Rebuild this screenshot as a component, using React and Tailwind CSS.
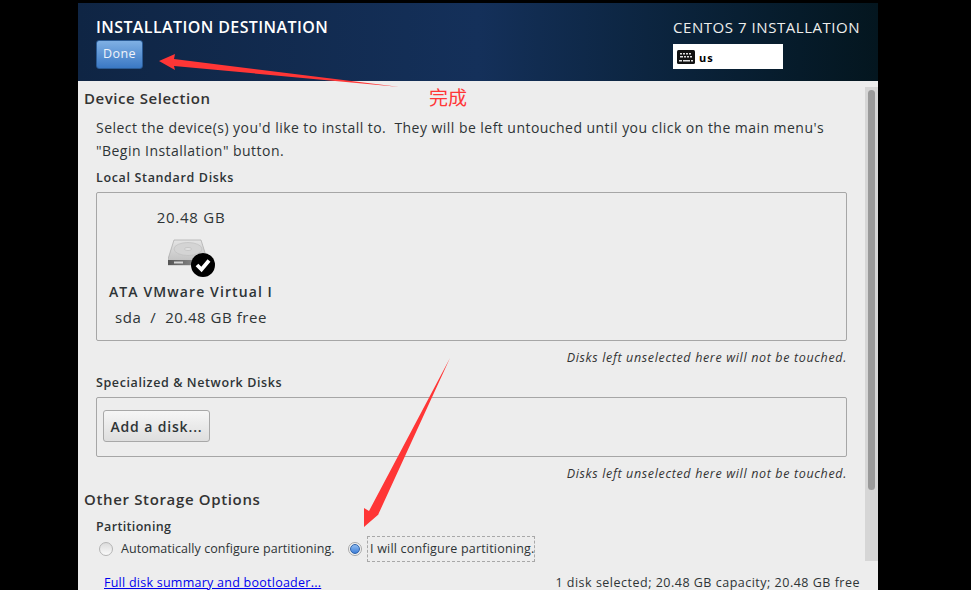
function Note() {
  return (
    <div className="h-[34px] pr-[18px] flex items-center justify-end italic text-[12.5px] tracking-[0.65px] text-[#333]">
      Disks left unselected here will not be touched.
    </div>
  );
}

function Radio({ checked }) {
  if (checked) {
    return (
      <span className="w-[14px] h-[14px] rounded-full border border-[#a8a8a8] bg-[#f4f4f4] flex items-center justify-center">
        <span className="w-[10px] h-[10px] rounded-full border border-[#2f62a8] bg-gradient-to-b from-[#8fbcf0] to-[#3f7fd8]" />
      </span>
    );
  }
  return (
    <span className="w-[14px] h-[14px] rounded-full border border-[#b4b4b4] bg-gradient-to-b from-[#dcdcdc] to-[#fafafa]" />
  );
}

function DiskIcon() {
  return (
    <svg width="48" height="40" viewBox="0 0 48 40">
      <defs>
        <linearGradient id="disk" x1="0" y1="0" x2="0" y2="1">
          <stop offset="0" stopColor="#e4e4e4" />
          <stop offset="1" stopColor="#bcbcbc" />
        </linearGradient>
        <linearGradient id="edge" x1="0" y1="0" x2="1" y2="0">
          <stop offset="0" stopColor="#555" />
          <stop offset="1" stopColor="#a0a0a0" />
        </linearGradient>
      </defs>
      <path d="M6 1 H33 L39 20 V26 H0 V20 Z" fill="url(#disk)" stroke="#a8a8a8" strokeWidth="0.7" />
      <ellipse cx="20" cy="10" rx="14" ry="6.5" fill="#d4d4d4" stroke="#c0c0c0" strokeWidth="0.7" />
      <ellipse cx="20" cy="10" rx="3.5" ry="1.5" fill="#e2e2e2" stroke="#b0b0b0" strokeWidth="0.5" />
      <rect x="0" y="21" width="39" height="5" fill="url(#edge)" />
      <rect x="6" y="22.5" width="9" height="2" fill="#d4d4d4" />
      <circle cx="35" cy="26" r="12" fill="#000" />
      <path d="M29 26 L33.5 30.5 L41 21.5" fill="none" stroke="#fff" strokeWidth="3.8" />
    </svg>
  );
}

function KeyboardIcon() {
  return (
    <svg width="18" height="14" viewBox="0 0 18 14">
      <rect width="18" height="14" rx="1.5" fill="#111" />
      <path d="M3 3h2v1.5H3zM6 3h2v1.5H6zM9 3h2v1.5H9zM12 3h2v1.5h-2zM3 6h3v1.5H3zM7 6h2v1.5H7zM10 6h2v1.5h-2zM13 6h2v1.5h-2zM2 10h3v1.5H2zM6 10h7v1.5H6zM14 10h2v1.5h-2z" fill="#ddd" />
    </svg>
  );
}

export default function App() {
  return (
    <div className="relative w-[971px] h-[590px] overflow-hidden bg-black pt-[3px] font-['Open_Sans','Noto_Sans_CJK_SC',sans-serif] text-[#2e3436]">
      <div className="ml-[78px] w-[800px] h-[587px] flex flex-col bg-[#ededed]">
        {/* header */}
        <div className="h-[78px] shrink-0 flex justify-between pl-[18px] pr-[18px] bg-gradient-to-r from-[#0f2544] via-[#14305a] to-[#04161f]">
          <div>
            <div className="mt-[13px] h-[22px] leading-[22px] text-[16px] font-semibold tracking-[0.4px] text-white whitespace-nowrap">
              INSTALLATION DESTINATION
            </div>
            <button className="mt-[2px] w-[47px] h-[29px] rounded-[3px] border border-[#2a5a94] bg-gradient-to-b from-[#7fb0e4] to-[#3a78c4] text-[12.5px] tracking-[0.4px] text-[#f0f4fa]">
              Done
            </button>
          </div>
          <div className="w-[187px]">
            <div className="mt-[14px] h-[20px] leading-[20px] text-[15px] tracking-[0.55px] text-[#eeeeec] whitespace-nowrap">
              CENTOS 7 INSTALLATION
            </div>
            <div className="mt-[7px] w-[110px] h-[25px] bg-white flex items-center gap-[4px] pl-[4px] text-black text-[11px] font-bold tracking-[0.9px]">
              <KeyboardIcon />
              <span className="pt-[3px]">us</span>
            </div>
          </div>
        </div>

        {/* scrolling body */}
        <div className="flex-1 flex min-h-0">
          <div className="w-[787px] shrink-0 pl-[6px]">
            <div className="mt-[7px] h-[20px] leading-[20px] text-[15px] font-semibold tracking-[0.55px] text-[#333]">
              Device Selection
            </div>
            <div className="pl-[12px]">
              <p className="mt-[8px] text-[14px] leading-[23px] tracking-[0.46px] text-[#2e3436] whitespace-nowrap">
                Select the device(s) you'd like to install to.&nbsp; They will be left untouched until you click on the main menu's
                <br />
                "Begin Installation" button.
              </p>
              <div className="mt-[7px] h-[18px] leading-[18px] text-[12.5px] font-semibold tracking-[0.65px]">
                Local Standard Disks
              </div>
              <div className="mt-[5px] w-[751px] h-[149px] rounded-[2px] border border-[#a6a6a6] flex flex-col">
                <div className="w-[188px] flex flex-col items-center">
                  <div className="mt-[14px] h-[20px] leading-[20px] text-[15px] tracking-[0.75px]">20.48 GB</div>
                  <div className="mt-[12px] h-[40px] pl-[2px]">
                    <DiskIcon />
                  </div>
                  <div className="mt-[2px] h-[22px] leading-[22px] text-[14px] font-semibold tracking-[1.1px] whitespace-nowrap">
                    ATA VMware Virtual I
                  </div>
                  <div className="mt-[4px] h-[20px] leading-[20px] text-[15px] tracking-[0.55px] whitespace-pre">
                    sda&nbsp; /&nbsp; 20.48 GB free
                  </div>
                </div>
              </div>
              <Note />
              <div className="h-[18px] -mt-[1px] leading-[18px] text-[12.5px] font-semibold tracking-[0.6px]">
                Specialized &amp; Network Disks
              </div>
              <div className="mt-[5px] w-[751px] h-[60px] rounded-[2px] border border-[#a6a6a6] flex items-center pl-[6px] pb-[2px]">
                <button className="w-[107px] h-[32px] rounded-[3px] border border-[#a8a8a8] bg-gradient-to-b from-[#f6f6f6] to-[#dedede] text-[14px] font-semibold tracking-[0.85px] text-[#2e3436]">
                  Add a disk...
                </button>
              </div>
              <Note />
            </div>
            <div className="-mt-[2px] h-[20px] leading-[20px] text-[15px] font-semibold tracking-[0.65px] text-[#333]">
              Other Storage Options
            </div>
            <div className="pl-[12px]">
              <div className="mt-[9px] h-[18px] leading-[18px] text-[12.5px] font-semibold tracking-[0.35px]">
                Partitioning
              </div>
              <div className="h-[26px] flex items-center pl-[3px] text-[12.5px]">
                <Radio />
                <span className="ml-[8px] w-[227px] tracking-[0.05px] whitespace-nowrap">Automatically configure partitioning.</span>
                <Radio checked />
                <span className="ml-[5px] h-[26px] pl-[2px] w-[168px] flex items-center border border-dashed border-[#a8a8a8] tracking-[0.2px] whitespace-nowrap">
                  I will configure partitioning.
                </span>
              </div>
            </div>
            <div className="mt-[11px] pl-[20px] w-[776px] h-[20px] flex justify-between items-center text-[12.5px]">
              <a className="text-[#0000ee] underline tracking-[0.25px] whitespace-nowrap">Full disk summary and bootloader...</a>
              <span className="tracking-[0.5px] whitespace-nowrap">1 disk selected; 20.48 GB capacity; 20.48 GB free</span>
            </div>
          </div>
          {/* scrollbar */}
          <div className="mt-[6px] w-[13px] h-[474px] bg-[#d6d6d6] pl-[3px] pt-[3px]">
            <div className="w-[7px] h-[400px] rounded-[4px] bg-[#9a9a9a]" />
          </div>
        </div>
      </div>

      {/* annotations */}
      <svg className="absolute left-0 top-0 pointer-events-none" width="971" height="590">
        <path d="M159 61 L175 54 L174 59 L400 87 L174 66 L175 70 Z" fill="#ff3636" />
        <path d="M364 527 L364 508 L369 511 L450 358 L378 515 L379 514 Z" fill="#ff3636" />
      </svg>
      <div className="absolute left-[429px] top-[85px] text-[19px] leading-[24px] text-[#ff3636] font-['Noto_Sans_CJK_SC',sans-serif]">
        完成
      </div>
    </div>
  );
}
